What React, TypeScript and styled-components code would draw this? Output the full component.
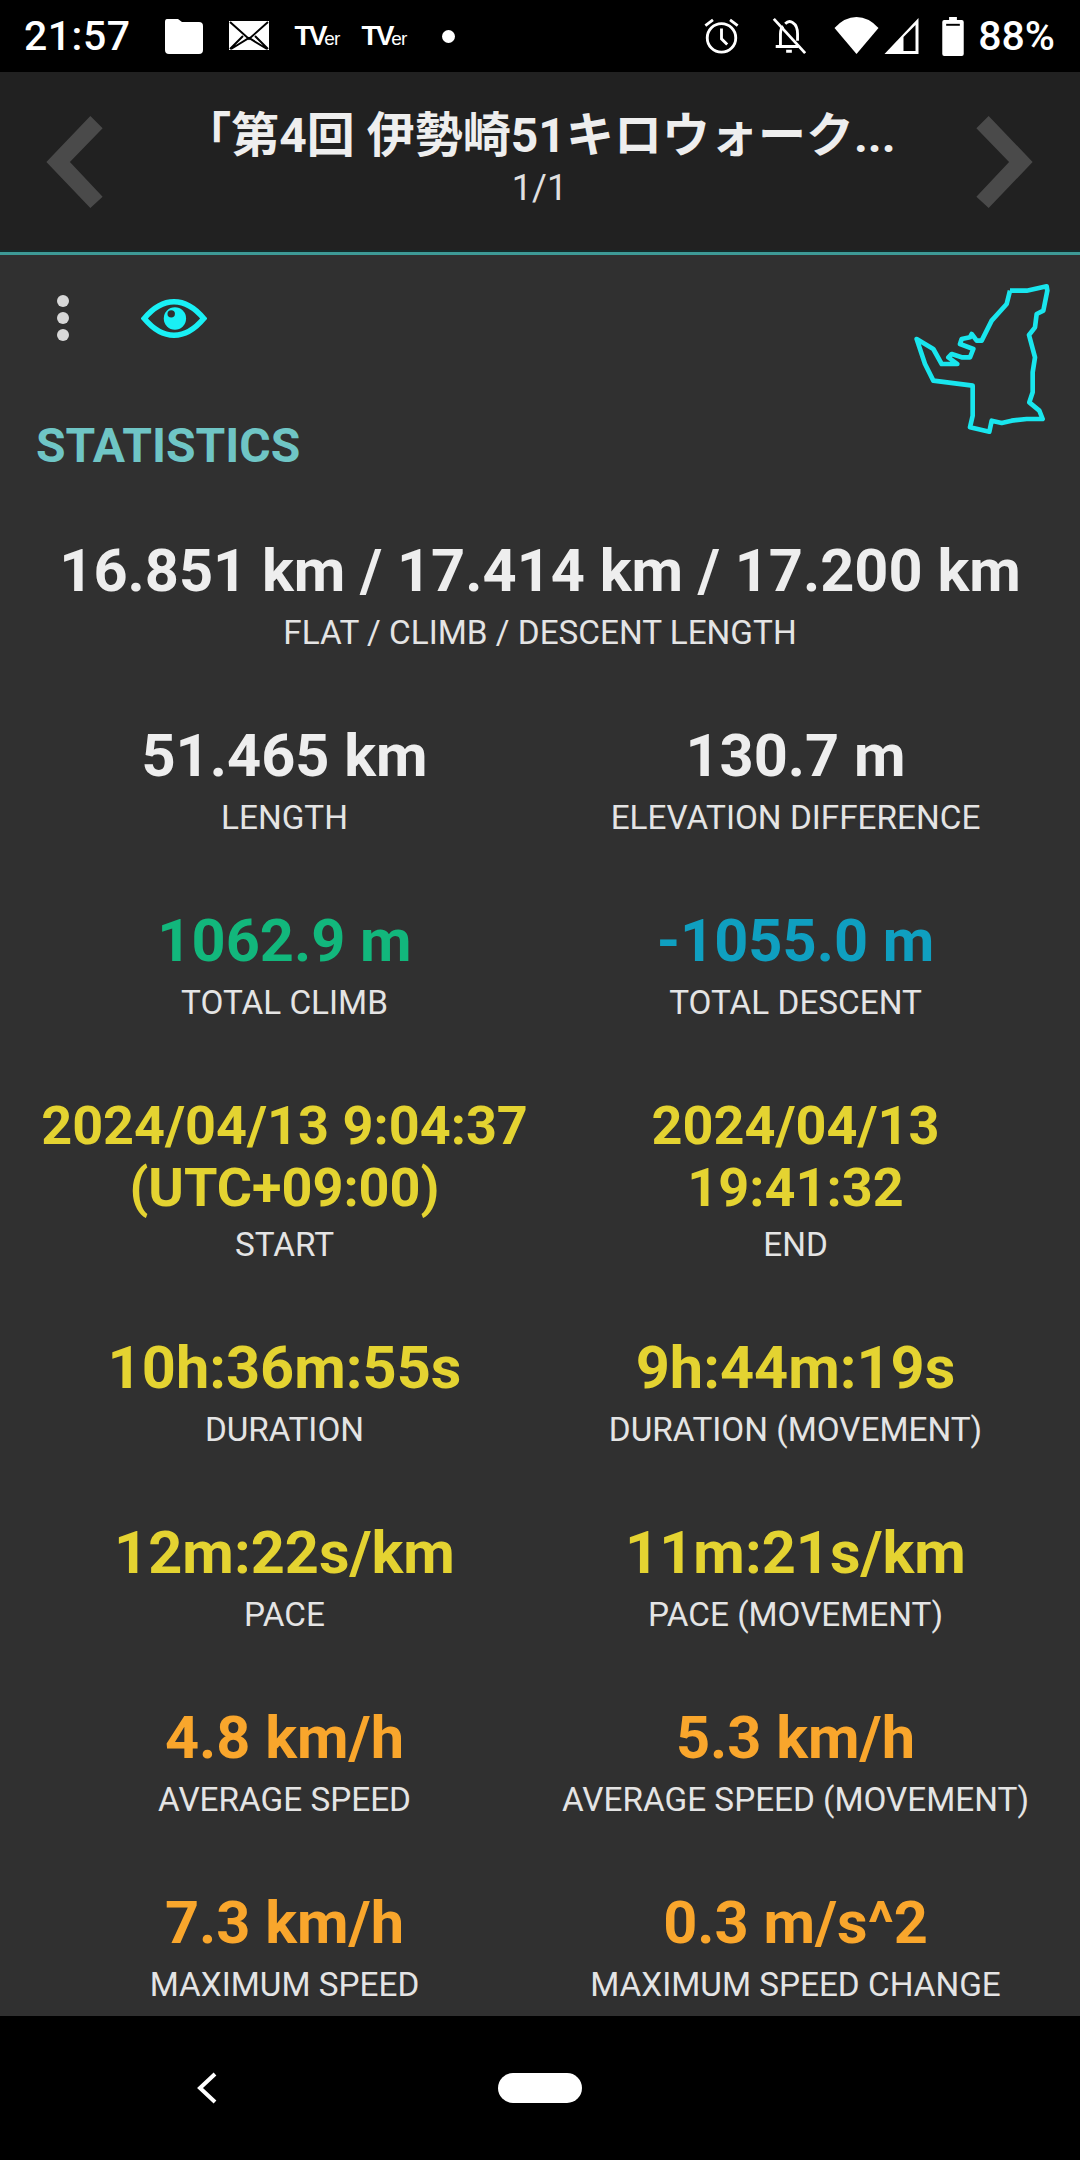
import React, { FunctionComponent } from "react";
import styled, { createGlobalStyle } from "styled-components";

type Tone = "white" | "green" | "blue" | "yellow" | "orange";

type Stat = {
  value: string;
  label: string;
  tone: Tone;
  compact?: boolean;
};

const toneColors: Record<Tone, string> = {
  white: "#eeeeee",
  green: "#12b77c",
  blue: "#0f9fc0",
  yellow: "#e4d331",
  orange: "#f9a62c"
};

const stats: Stat[] = [
  { value: "51.465 km", label: "LENGTH", tone: "white" },
  { value: "130.7 m", label: "ELEVATION DIFFERENCE", tone: "white" },
  { value: "1062.9 m", label: "TOTAL CLIMB", tone: "green" },
  { value: "-1055.0 m", label: "TOTAL DESCENT", tone: "blue" },
  { value: "2024/04/13 9:04:37 (UTC+09:00)", label: "START", tone: "yellow", compact: true },
  { value: "2024/04/13 19:41:32", label: "END", tone: "yellow", compact: true },
  { value: "10h:36m:55s", label: "DURATION", tone: "yellow" },
  { value: "9h:44m:19s", label: "DURATION (MOVEMENT)", tone: "yellow" },
  { value: "12m:22s/km", label: "PACE", tone: "yellow" },
  { value: "11m:21s/km", label: "PACE (MOVEMENT)", tone: "yellow" },
  { value: "4.8 km/h", label: "AVERAGE SPEED", tone: "orange" },
  { value: "5.3 km/h", label: "AVERAGE SPEED (MOVEMENT)", tone: "orange" },
  { value: "7.3 km/h", label: "MAXIMUM SPEED", tone: "orange" },
  { value: "0.3 m/s^2", label: "MAXIMUM SPEED CHANGE", tone: "orange" }
];

const trackPoints =
  "390,65 440,65 500,52 502,65 490,125 470,135 465,175 447,198 465,265 458,310 458,370 448,400 478,425 488,450 440,450 395,455 365,462 335,455 328,488 270,475 278,440 278,350 160,335 135,285 110,210 160,240 185,285 232,285 205,265 215,255 245,265 270,265 280,240 240,225 245,210 270,205 275,195 290,215 305,215 335,155 380,105 390,65";

const StatBlock: FunctionComponent<Stat> = ({ value, label, tone, compact }) => (
  <StatCell>
    <StatValue $tone={tone} $compact={compact}>
      {value}
    </StatValue>
    <StatLabel $compact={compact}>{label}</StatLabel>
  </StatCell>
);

const App: FunctionComponent = () => (
  <Screen>
    <GlobalStyle />
    <StatusBar>
      <StatusGroup>
        <Clock>21:57</Clock>
        <NotificationIcons>
          <svg width="39" height="35" viewBox="0 0 39 35" fill="#fff">
            <path d="M3 0h11l4 3h17q4 0 4 4v24q0 4-4 4H5q-4 0-4-4V3q0-3 2-3z" />
          </svg>
          <svg width="40" height="30" viewBox="0 0 40 30">
            <path d="M0 0h40v29H0z" fill="#fff" />
            <path d="M1 1l19 17L39 1M1 28l13-13M39 28L26 15M2 28l18-11 18 11" fill="none" stroke="#000" strokeWidth="2" />
          </svg>
          <TverMark>
            TV<small>er</small>
          </TverMark>
          <TverMark>
            TV<small>er</small>
          </TverMark>
          <Dot />
        </NotificationIcons>
      </StatusGroup>
      <StatusGroup>
        <svg width="37" height="38" viewBox="0 0 38 40" fill="none" stroke="#fff" strokeWidth="3">
          <circle cx="19" cy="22" r="15" />
          <path d="M19 12v11l6 6M2 9l8-6M36 9l-8-6" />
        </svg>
        <BellIcon width="36" height="38" viewBox="0 0 36 40" fill="none" stroke="#fff" strokeWidth="3">
          <path d="M4 31h24M9 31V18q0-6 3-8M14 7q4-4 8-1 5 3 5 12v7M15 36h6" />
          <path d="M2 2l33 36" />
        </BellIcon>
        <WifiIcon width="45" height="38" viewBox="0 0 44 38" fill="#fff">
          <path d="M22 37L0 11Q10 0 22 0t22 11z" />
        </WifiIcon>
        <SignalIcon width="37" height="38" viewBox="0 0 36 38">
          <path d="M35 1v36H1z" fill="#fff" />
          <path d="M32 8v26H20V20z" fill="#000" />
        </SignalIcon>
        <BatteryIcon width="24" height="39" viewBox="0 0 22 40">
          <path d="M7 0h8v3h5q2 0 2 2v33q0 2-2 2H2q-2 0-2-2V5q0-2 2-2h5z" fill="#fff" />
          <path d="M4 7h14v2H4z" fill="#000" />
        </BatteryIcon>
        <Percent>88%</Percent>
      </StatusGroup>
    </StatusBar>

    <Header>
      <Chevron width="57" height="92" viewBox="0 0 55 90">
        <polygon points="0,45 43,0 55,12 23,45 55,79 43,90" />
      </Chevron>
      <HeaderText>
        <Title>「第4回 伊勢崎51キロウォーク...</Title>
        <Counter>1/1</Counter>
      </HeaderText>
      <Chevron width="57" height="92" viewBox="0 0 55 90">
        <polygon points="55,45 12,0 0,12 32,45 0,79 12,90" />
      </Chevron>
    </Header>

    <Content>
      <ToolRow>
        <ToolIcons>
          <MenuDots>
            <MenuDot />
            <MenuDot />
            <MenuDot />
          </MenuDots>
          <svg width="66" height="39" viewBox="0 0 68 42">
            <path d="M2 21Q17 3 34 3t32 18Q51 39 34 39T2 21z" fill="none" stroke="#19f0f5" strokeWidth="6" />
            <circle cx="35" cy="21" r="12" fill="#19f0f5" />
            <circle cx="31" cy="16" r="4" fill="#303030" />
          </svg>
        </ToolIcons>
        <TrackMap viewBox="0 0 600 540" width="200" height="180">
          <polyline points={trackPoints} fill="none" stroke="#19e6ee" strokeWidth="14" strokeLinejoin="round" />
        </TrackMap>
      </ToolRow>
      <SectionTitle>STATISTICS</SectionTitle>
      <StatCell $wide>
        <StatValue $tone="white">16.851 km / 17.414 km / 17.200 km</StatValue>
        <StatLabel>FLAT / CLIMB / DESCENT LENGTH</StatLabel>
      </StatCell>
      <StatsGrid>
        {stats.map((stat) => (
          <StatBlock key={stat.label} {...stat} />
        ))}
      </StatsGrid>
    </Content>

    <NavBar>
      <NavBack width="24" height="34" viewBox="0 0 24 34" fill="none" stroke="#fff" strokeWidth="4">
        <path d="M20 3L5 17l15 14" />
      </NavBack>
      <HomePill />
    </NavBar>
  </Screen>
);

const GlobalStyle = createGlobalStyle`
  html, body {
    margin: 0;
    padding: 0;
    background: #000;
  }
  body {
    font-family: Roboto, "Noto Sans CJK JP", sans-serif;
  }
`;

const Screen = styled.div`
  width: 1080px;
  height: 2160px;
  display: flex;
  flex-direction: column;
  overflow: hidden;
`;

const StatusBar = styled.div`
  height: 72px;
  flex: none;
  background: #000;
  color: #fff;
  display: flex;
  justify-content: space-between;
  align-items: center;
  padding: 0 25px 0 24px;
  box-sizing: border-box;
`;

const StatusGroup = styled.div`
  display: flex;
  align-items: center;
`;

const Clock = styled.span`
  font-size: 41px;
  font-weight: 500;
  letter-spacing: 0.5px;
`;

const NotificationIcons = styled.div`
  display: flex;
  align-items: center;
  gap: 26px;
  margin-left: 33px;
`;

const TverMark = styled.span`
  font-family: "Liberation Sans", sans-serif;
  font-size: 28px;
  font-weight: 700;
  letter-spacing: -3px;
  width: 41px;
  white-space: nowrap;
  small {
    font-size: 19px;
    font-weight: 400;
    letter-spacing: -1px;
  }
`;

const Dot = styled.span`
  width: 13px;
  height: 13px;
  border-radius: 50%;
  background: #fff;
  margin-left: 13px;
`;

const BellIcon = styled.svg`
  margin-left: 31px;
`;

const WifiIcon = styled.svg`
  margin-left: 27px;
`;

const SignalIcon = styled.svg`
  margin-left: 4px;
`;

const BatteryIcon = styled.svg`
  margin-left: 21px;
`;

const Percent = styled.span`
  font-size: 41px;
  font-weight: 500;
  margin-left: 13px;
`;

const Header = styled.div`
  height: 180px;
  flex: none;
  background: #212121;
  display: flex;
  align-items: center;
  justify-content: space-between;
  padding: 0 47px 0 46px;
  box-sizing: border-box;
`;

const Chevron = styled.svg`
  flex: none;
  fill: #4a4a4a;
`;

const HeaderText = styled.div`
  text-align: center;
  margin-top: -8px;
`;

const Title = styled.div`
  color: #eeeeee;
  font-size: 48px;
  font-weight: 700;
  line-height: 60px;
  white-space: nowrap;
`;

const Counter = styled.div`
  color: #e0e0e0;
  font-size: 36px;
  line-height: 44px;
`;

const Content = styled.div`
  flex: 1;
  min-height: 0;
  background: #303030;
  border-top: 3px solid #3d9a96;
  box-shadow: 0 -2px 0 #152a2a;
  overflow: hidden;
`;

const ToolRow = styled.div`
  height: 163px;
  display: flex;
  justify-content: space-between;
  align-items: flex-start;
`;

const ToolIcons = styled.div`
  display: flex;
  align-items: center;
  gap: 72px;
  padding: 40px 0 0 57px;
`;

const MenuDots = styled.div`
  display: flex;
  flex-direction: column;
  gap: 5px;
`;

const MenuDot = styled.span`
  width: 12px;
  height: 12px;
  border-radius: 50%;
  background: #d8d8d8;
`;

const TrackMap = styled.svg`
  flex: none;
  margin-top: 14px;
`;

const SectionTitle = styled.h2`
  margin: 0 0 0 36px;
  color: #6fc5c5;
  font-size: 48px;
  font-weight: 700;
  line-height: 56px;
`;

const StatsGrid = styled.div`
  display: grid;
  grid-template-columns: 511px 511px;
  justify-content: center;
`;

const StatCell = styled.div<{ $wide?: boolean }>`
  text-align: center;
  padding-top: ${(p) => (p.$wide ? "66px" : "36px")};
  padding-bottom: 34px;
`;

const StatValue = styled.div<{ $tone: Tone; $compact?: boolean }>`
  color: ${(p) => toneColors[p.$tone]};
  font-size: ${(p) => (p.$compact ? "54px" : "59.5px")};
  font-weight: 700;
  line-height: ${(p) => (p.$compact ? "62px" : "63px")};
`;

const StatLabel = styled.div<{ $compact?: boolean }>`
  color: #e4e4e4;
  font-size: 33.3px;
  line-height: 44px;
  margin-top: ${(p) => (p.$compact ? "4px" : "8px")};
`;

const NavBar = styled.div`
  height: 144px;
  flex: none;
  background: #000;
  position: relative;
`;

const NavBack = styled.svg`
  position: absolute;
  left: 195px;
  top: 55px;
`;

const HomePill = styled.div`
  position: absolute;
  left: 498px;
  top: 57px;
  width: 84px;
  height: 30px;
  border-radius: 15px;
  background: #fff;
`;

export default App;
